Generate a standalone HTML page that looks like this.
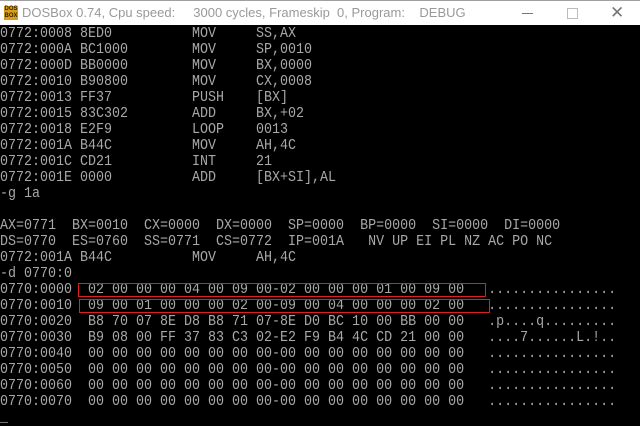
<!DOCTYPE html>
<html><head><meta charset="utf-8"><style>
html,body{margin:0;padding:0;width:640px;height:421px;overflow:hidden;background:#000}
#tb{position:absolute;left:0;top:0;width:640px;height:25px;background:#fff;border-top:1px solid #a0a0a0;box-sizing:border-box}
#tb .t{position:absolute;left:22px;top:4px;font:13px "Liberation Sans",sans-serif;color:#999;white-space:pre}
#ico{position:absolute;left:4px;top:5px;width:14px;height:14px;background:#d4a017;color:#3a1a00;font:bold 6px/7px "Liberation Sans",sans-serif;text-align:center}
pre{position:absolute;left:0;top:26px;margin:0;font:15px/16px "Liberation Mono",monospace;color:#a8a8a8;transform:scaleX(0.8889);transform-origin:0 0}
.box{position:absolute;border:1px solid #e02020}
</style></head><body>
<div id="tb"><div id="ico">DOS<br>BOX</div><div class="t">DOSBox 0.74, Cpu speed:     3000 cycles, Frameskip  0, Program:    DEBUG</div>
<div style="position:absolute;left:522px;top:12px;width:11px;height:1px;background:#777"></div>
<div style="position:absolute;left:567px;top:7px;width:9px;height:9px;border:1px solid #bbb"></div>
<div style="position:absolute;left:610px;top:2px;font:17px 'Liberation Sans',sans-serif;color:#777">✕</div>
</div>
<pre>0772:0008 8ED0          MOV     SS,AX
0772:000A BC1000        MOV     SP,0010
0772:000D BB0000        MOV     BX,0000
0772:0010 B90800        MOV     CX,0008
0772:0013 FF37          PUSH    [BX]
0772:0015 83C302        ADD     BX,+02
0772:0018 E2F9          LOOP    0013
0772:001A B44C          MOV     AH,4C
0772:001C CD21          INT     21
0772:001E 0000          ADD     [BX+SI],AL
-g 1a

AX=0771  BX=0010  CX=0000  DX=0000  SP=0000  BP=0000  SI=0000  DI=0000
DS=0770  ES=0760  SS=0771  CS=0772  IP=001A   NV UP EI PL NZ AC PO NC
0772:001A B44C          MOV     AH,4C
-d 0770:0
0770:0000  02 00 00 00 04 00 09 00-02 00 00 00 01 00 09 00   ................
0770:0010  09 00 01 00 00 00 02 00-09 00 04 00 00 00 02 00   ................
0770:0020  B8 70 07 8E D8 B8 71 07-8E D0 BC 10 00 BB 00 00   .p....q.........
0770:0030  B9 08 00 FF 37 83 C3 02-E2 F9 B4 4C CD 21 00 00   ....7......L.!..
0770:0040  00 00 00 00 00 00 00 00-00 00 00 00 00 00 00 00   ................
0770:0050  00 00 00 00 00 00 00 00-00 00 00 00 00 00 00 00   ................
0770:0060  00 00 00 00 00 00 00 00-00 00 00 00 00 00 00 00   ................
0770:0070  00 00 00 00 00 00 00 00-00 00 00 00 00 00 00 00   ................
_</pre>
<div class="box" style="left:78px;top:283px;width:406px;height:12px"></div>
<div class="box" style="left:79px;top:299px;width:409px;height:12px"></div>
</body></html>
